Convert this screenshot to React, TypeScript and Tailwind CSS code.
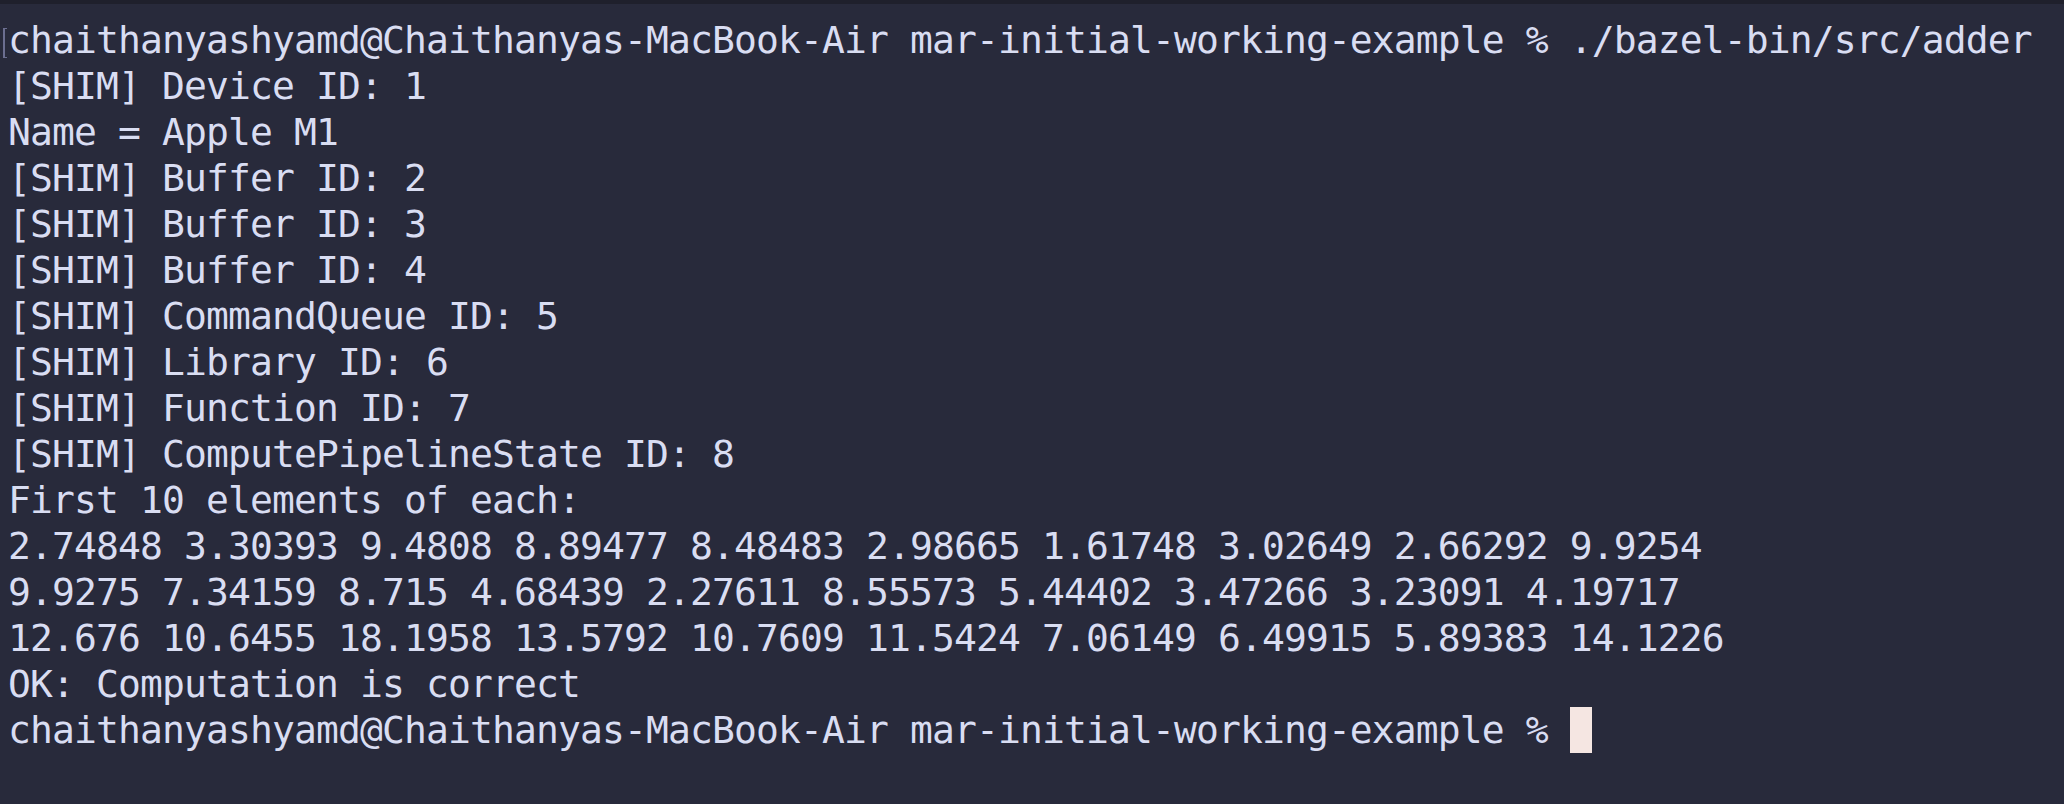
const PROMPT = "chaithanyashyamd@Chaithanyas-MacBook-Air mar-initial-working-example %";

const OUTPUT = [
  "[SHIM] Device ID: 1",
  "Name = Apple M1",
  "[SHIM] Buffer ID: 2",
  "[SHIM] Buffer ID: 3",
  "[SHIM] Buffer ID: 4",
  "[SHIM] CommandQueue ID: 5",
  "[SHIM] Library ID: 6",
  "[SHIM] Function ID: 7",
  "[SHIM] ComputePipelineState ID: 8",
  "First 10 elements of each:",
  "2.74848 3.30393 9.4808 8.89477 8.48483 2.98665 1.61748 3.02649 2.66292 9.9254",
  "9.9275 7.34159 8.715 4.68439 2.27611 8.55573 5.44402 3.47266 3.23091 4.19717",
  "12.676 10.6455 18.1958 13.5792 10.7609 11.5424 7.06149 6.49915 5.89383 14.1226",
  "OK: Computation is correct",
];

export default function App() {
  return (
    <div className="h-[804px] w-full overflow-hidden bg-[#282a3b] flex flex-col">
      {/* window edge */}
      <div className="h-[4px] bg-[#1f202c]" />

      <div
        className="relative pt-[13px] pl-[8px] text-[38px] tracking-[-0.88px] leading-[46px] text-[#d9ddf2] whitespace-pre"
        style={{ fontFamily: '"DejaVu Sans Mono", "Liberation Mono", monospace' }}
      >
        {/* leftover mark from a redraw */}
        <span className="absolute left-[3px] top-[24px] h-[30px] w-[4px] border-l-2 border-t border-b border-[#6b6e90]" />

        <div>{PROMPT} ./bazel-bin/src/adder</div>
        {OUTPUT.map((line, i) => (
          <div key={i}>{line}</div>
        ))}
        <div className="flex items-center">
          <span>{PROMPT} </span>
          <span className="inline-block h-[46px] w-[22px] bg-[#f5e6e2]" />
        </div>
      </div>
    </div>
  );
}
